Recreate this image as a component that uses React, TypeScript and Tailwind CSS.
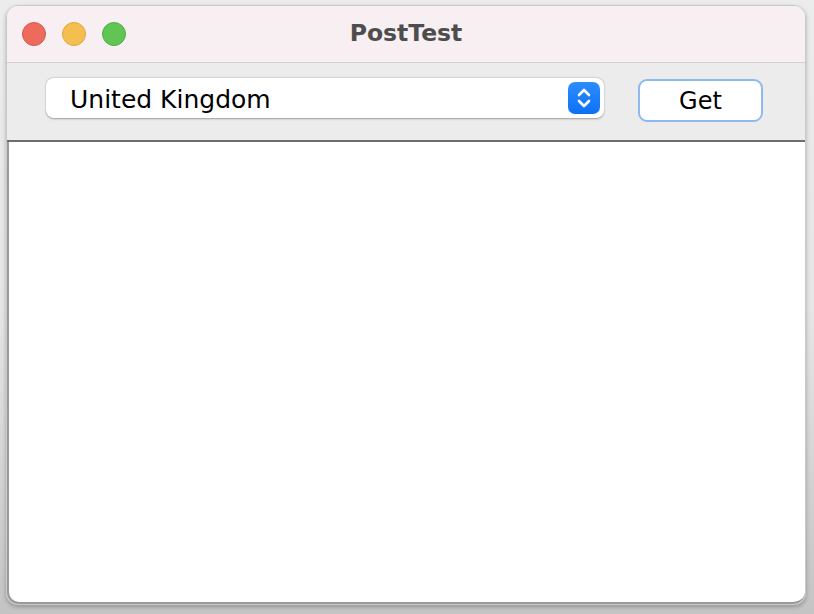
export default function App() {
    return (
        <div className="w-[814px] h-[614px] bg-gradient-to-b from-[#ececec] via-[#e6e6e6] to-[#c4c4c4] pt-[5px] pl-[6px] font-['DejaVu_Sans',sans-serif]">
            <div className="w-[800px] h-[600px] rounded-[12px] overflow-hidden border border-[#c9c9c9] flex flex-col shadow-[0_2px_4px_rgba(0,0,0,0.25)]">
                {/* Title bar */}
                <div className="relative h-[57px] shrink-0 bg-[#f8eff2] border-b border-[#d3d0d1] flex items-center justify-center pb-[1px]">
                    <div className="absolute left-[15px] top-[16px] flex gap-[16px]">
                        <span className="w-[24px] h-[24px] rounded-full bg-[#ec6a5e] border border-[#d65a4f]" />
                        <span className="w-[24px] h-[24px] rounded-full bg-[#f5bf4f] border border-[#dea83d]" />
                        <span className="w-[24px] h-[24px] rounded-full bg-[#61c554] border border-[#50ae44]" />
                    </div>
                    <span className="text-[23.5px] font-bold text-[#4d4d4d] leading-none">PostTest</span>
                </div>

                {/* Toolbar */}
                <div className="h-[79px] shrink-0 bg-[#ececec] flex items-start pt-[15px] pl-[39px] pr-[42px] border-b-2 border-[#6e6e6e]">
                    <div className="w-[558px] h-[40px] bg-white rounded-[8px] shadow-[0_0.5px_2px_rgba(0,0,0,0.35)] flex items-center pl-[24px] pr-[4px]">
                        <span className="flex-1 text-[25px] text-black leading-none pt-[2px]">United Kingdom</span>
                        <span className="w-[32px] h-[32px] rounded-[7px] bg-gradient-to-b from-[#2c8cfd] to-[#0a72f5] flex items-center justify-center">
                            <svg width="16" height="22" viewBox="0 0 16 22" fill="none" stroke="white" strokeWidth="2.6" strokeLinecap="round" strokeLinejoin="round">
                                <path d="M3 8 L8 3 L13 8" />
                                <path d="M3 14 L8 19 L13 14" />
                            </svg>
                        </span>
                    </div>
                    <button className="ml-auto mt-[1px] w-[125px] h-[43px] rounded-[9px] bg-white border-2 border-[#8cbaf0] text-[24px] text-black leading-none flex items-center justify-center">
                        Get
                    </button>
                </div>

                {/* Content */}
                <div className="flex-1 bg-white border-l-2 border-b-2 border-[#9a9a9a] rounded-bl-[12px] rounded-br-[12px]" />
            </div>
        </div>
    );
}
